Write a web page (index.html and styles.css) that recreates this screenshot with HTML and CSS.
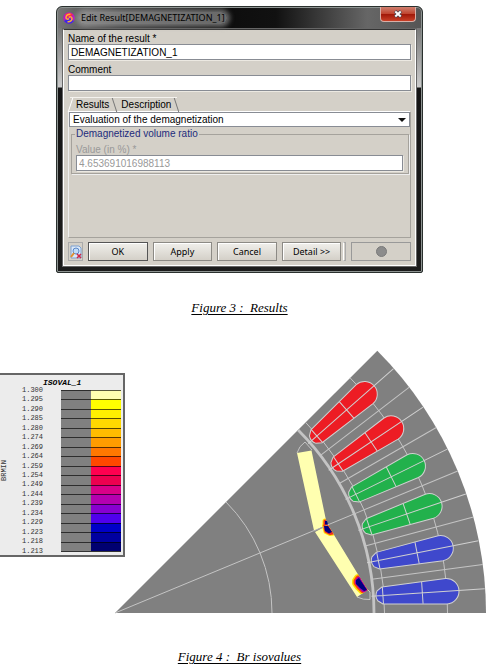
FILE: index.html
```
<!DOCTYPE html>
<html lang="en">
<head>
<meta charset="utf-8">
<title>Demagnetization results</title>
<link rel="stylesheet" href="styles.css">
</head>
<body>
<main class="page">
  <figure class="fig fig-dialog">
    <section class="dialog" aria-label="Edit Result">
      <header class="titlebar">
        <svg class="app-icon" viewBox="0 0 12 12" aria-hidden="true">
          <circle cx="6" cy="6" r="5.8" fill="#b818c0"/>
          <path d="M1 9A6 6 0 0 0 11 9L6 6Z" fill="#3a28e8"/>
          <path d="M2 2.500A6 6 0 0 1 10 2.500L6 6Z" fill="#ff2a48"/>
          <path d="M7.500 2.300C4.500 2 3 3.500 3 5.500S5 7.500 6 6.500" fill="none" stroke="#ffb030" stroke-width="1.500"/>
          <path d="M4.500 9.700C7.500 10 9 8.500 9 6.500S7 4.500 6 5.500" fill="none" stroke="#ffb030" stroke-width="1.500"/>
        </svg>
        <h1 class="title">Edit Result[DEMAGNETIZATION_1]</h1>
        <button class="close" type="button" aria-label="Close">
          <svg viewBox="0 0 10 8" aria-hidden="true">
            <path d="M2 1.200L8 6.800M8 1.200L2 6.800" stroke="#4d4a55" stroke-width="3.400"/>
            <path d="M2.300 1.500L7.700 6.500M7.700 1.500L2.300 6.500" stroke="#fff" stroke-width="1.900"/>
          </svg>
        </button>
      </header>
      <form class="client">
        <label class="label" for="name">Name of the result *</label>
        <input class="field" id="name" type="text" value="DEMAGNETIZATION_1">
        <label class="label" for="comment">Comment</label>
        <input class="field" id="comment" type="text">
        <div class="tabs" role="tablist">
          <button class="tab tab-on" type="button" role="tab" aria-selected="true">Results</button>
          <button class="tab" type="button" role="tab" aria-selected="false">Description</button>
        </div>
        <div class="panel" role="tabpanel">
          <div class="combo">
            <select class="select" aria-label="Result type"><option>Evaluation of the demagnetization</option></select>
          </div>
          <fieldset class="group">
            <legend>Demagnetized volume ratio</legend>
            <label class="label label-off" for="value">Value (in %) *</label>
            <input class="field" id="value" type="text" value="4.653691016988113" disabled>
          </fieldset>
        </div>
        <div class="actions">
          <button class="tool" type="button" aria-label="Preview">
            <svg viewBox="0 0 12 14" aria-hidden="true">
              <path d="M1 1H9L11 3V13H1Z" fill="#dce9f8" stroke="#7da0d0"/>
              <circle cx="6" cy="6" r="3" fill="#c0dcf8" stroke="#5a86c8"/>
              <path d="M4 8L1 12" stroke="#e09030" stroke-width="2"/>
              <path d="M7 9L11 13M11 9L7 13" stroke="#d02848" stroke-width="1.500"/>
            </svg>
          </button>
          <button class="btn btn-default" type="button">OK</button>
          <button class="btn" type="button">Apply</button>
          <button class="btn" type="button">Cancel</button>
          <button class="btn" type="button">Detail &gt;&gt;</button>
          <span class="grip"></span>
          <span class="status"><span class="lamp"></span></span>
        </div>
      </form>
    </section>
    <figcaption class="caption">Figure 3 :&nbsp; Results</figcaption>
  </figure>

  <figure class="fig fig-plot">
    <div class="plot">
      <div class="scale">
        <div class="scale-axis">BRMIN</div>
        <div class="scale-title">ISOVAL_1</div>
        <ol class="scale-values">
          <li>1.300</li><li>1.295</li><li>1.290</li><li>1.285</li><li>1.280</li><li>1.274</li>
          <li>1.269</li><li>1.264</li><li>1.259</li><li>1.254</li><li>1.249</li><li>1.244</li>
          <li>1.239</li><li>1.234</li><li>1.229</li><li>1.223</li><li>1.218</li><li>1.213</li>
        </ol>
        <div class="scale-bands">
          <i class="c1"></i><i class="c2"></i><i class="c3"></i><i class="c4"></i><i class="c5"></i><i class="c6"></i>
          <i class="c7"></i><i class="c8"></i><i class="c9"></i><i class="c10"></i><i class="c11"></i><i class="c12"></i>
          <i class="c13"></i><i class="c14"></i><i class="c15"></i><i class="c16"></i><i class="c17"></i>
        </div>
      </div>
      <svg class="motor" viewBox="0 -263 372 264" role="img" aria-label="Motor section with Br isovalues">
        <defs>
          <g id="slot">
            <path d="M268-8.500L332-12.700A12.700 12.700 0 0 1 332 12.700L268 8.500L263 5Q260 0 263-5Z"/>
            <path d="M257 0H370.500M308-11V11M268.500-8.500V8.500" fill="none"/>
          </g>
          <path id="magnets" d="M182-160L196.500-162.500L212-88L199-82.500ZM200-81L213-88L252.500-23L242-16Z"/>
          <clipPath id="in-magnets"><use href="#magnets"/></clipPath>
        </defs>
        <path d="M0 0H371A371 371 0 0 0 262.300-262.300Z" fill="#808080"/>
        <g fill="none" stroke="#c4c4c4">
          <path d="M157 0A157 157 0 0 0 111-111M0 0L239-99"/>
          <path d="M269.500 0A269.500 269.500 0 0 0 190.600-190.600M332.500 0A332.500 332.500 0 0 0 235.100-235.100"/>
          <path d="M259 0H371" transform="rotate(-7.500)"/>
          <path d="M259 0H371" transform="rotate(-15)"/>
          <path d="M259 0H371" transform="rotate(-22.500)"/>
          <path d="M259 0H371" transform="rotate(-30)"/>
          <path d="M259 0H371" transform="rotate(-37.500)"/>
          <path d="M259 0A259 259 0 0 0 183.100-183.100" stroke-width="2.800"/>
          <path d="M182-160Q184-167 190-171L197-163M242-16Q248-13 255-13.500V-21L252-24"/>
        </g>
        <g stroke="#d0d0d0">
          <use href="#slot" transform="rotate(-3.750)" fill="#3f48cc"/>
          <use href="#slot" transform="rotate(-11.250)" fill="#3f48cc"/>
          <use href="#slot" transform="rotate(-18.750)" fill="#22b14c"/>
          <use href="#slot" transform="rotate(-26.250)" fill="#22b14c"/>
          <use href="#slot" transform="rotate(-33.750)" fill="#ed1c24"/>
          <use href="#slot" transform="rotate(-41.250)" fill="#ed1c24"/>
        </g>
        <use href="#magnets" fill="#ffffb0"/>
        <path d="M199-82L212-88" stroke="#aaa"/>
        <g clip-path="url(#in-magnets)" stroke-linejoin="round">
          <path d="M210-92H213V-88H210Z M209.500-87H213L218-80L215-79.500L211-81.500Z" fill="#ffe000" stroke="#ffe000" stroke-width="5"/>
          <path d="M210-92H213V-88H210Z M209.500-87H213L218-80L215-79.500L211-81.500Z" fill="#f03020" stroke="#f03020" stroke-width="3"/>
          <path d="M243-35L241-32L241-30L244-26L248-22L254-20V-38Z" fill="#ffe000" stroke="#ffe000" stroke-width="8"/>
          <path d="M243-35L241-32L241-30L244-26L248-22L254-20V-38Z" fill="#ff5000" stroke="#ff4010" stroke-width="5"/>
          <path d="M243-35L241-32L241-30L244-26L248-22L254-20V-38Z" fill="#a000b0" stroke="#a000b0" stroke-width="2"/>
        </g>
        <g fill="#000080">
          <path d="M210-92H212L213-88.500H210Z M209-87H213L217-81L214-79.500L210-82Z"/>
          <path d="M244-35L252-23L249-22L245-25L241-29V-33Z"/>
        </g>
      </svg>
    </div>
    <figcaption class="caption">Figure 4 :&nbsp; Br isovalues</figcaption>
  </figure>
</main>
</body>
</html>
```
FILE: styles.css
```
* { box-sizing: border-box; }
body { margin: 0; background: #fff; color: #000; }
.page { padding-top: 6px; }
.fig { margin: 0; }
.caption {
  padding-right: 12px;
  text-align: center;
  font: italic 13px/16px "Liberation Serif", serif;
  text-decoration: underline;
  text-underline-offset: 2px;
}
button, input, select { margin: 0; padding: 0; border-radius: 0; font: inherit; color: inherit; }

/* Dialog window */
.dialog {
  width: calc(100% - 124px);
  max-width: 367px;
  margin-left: 56px;
  padding: 0 6px 6px;
  border: 1px solid #2a302e;
  border-radius: 6px 6px 2px 2px;
  box-shadow: inset 0 0 0 1px #8d9391;
  background:
    linear-gradient(90deg, #777 0, #333 18%, #0c0c0c 42%, #111 60%, #666 85%, #555) top / 100% 21px no-repeat,
    linear-gradient(#555 0, #777 20px, #ccc 80px, #151515 81px, #1c1c1c);
  font: 10px/12px "Liberation Sans", sans-serif;
}
.titlebar { display: flex; align-items: center; height: 22px; }
.app-icon { width: 12px; height: 12px; flex: none; }
.title {
  margin: 0 auto 0 4px;
  padding: 0 2px;
  border-radius: 8px;
  background: rgba(170, 170, 170, .6);
  box-shadow: 0 0 5px 3px rgba(170, 170, 170, .6);
  font: 9px/12px "Noto Sans", sans-serif;
  white-space: nowrap;
}
.close {
  align-self: flex-start;
  display: grid;
  place-items: center;
  width: 36px;
  height: 15px;
  border: 1px solid #d8b0a8;
  border-top: 0;
  border-radius: 0 0 4px 4px;
  background: linear-gradient(#d08070, #c04530 48%, #a01808 52%, #c84028);
}
.close svg { width: 10px; height: 8px; }
.client {
  padding: 1px 4px 4px;
  border: 1px solid #fff;
  border-top-color: #333;
  outline: 1px solid #666;
  background: #d4d0c8;
}
.label { display: block; height: 13px; line-height: 15px; }
.label-off { color: #999; }
.field {
  display: block;
  width: 100%;
  height: 16px;
  margin-bottom: 2px;
  padding: 0 2px;
  border: 1px solid #888c94;
  box-shadow: 1px 1px #ece9e2;
  background: #fff;
}
.field:disabled { color: #999; }
.tabs { display: flex; padding: 4px 0 0 2px; }
.tab {
  position: relative;
  height: 14px;
  padding: 0 6px;
  border: 0;
  border-top: 1px solid #f4f2ee;
  background: none;
}
.tab::after {
  content: "";
  position: absolute;
  top: 0;
  right: 0;
  width: 1px;
  height: 14px;
  background: #777;
  transform: skewX(18deg);
}
.tab-on::before {
  content: "";
  position: absolute;
  top: 0;
  left: 0;
  width: 1px;
  height: 14px;
  background: #fff;
  transform: skewX(-18deg);
}
.panel { height: 127px; border: 1px solid #a5a29c; border-top-color: #fff; border-left-color: #eee; }
.combo { position: relative; }
.combo::after {
  content: "";
  position: absolute;
  top: 6px;
  right: 4px;
  border: 4px solid transparent;
  border-top-color: #111;
  border-bottom: 0;
  pointer-events: none;
}
.select {
  display: block;
  width: 100%;
  height: 15px;
  padding: 0 3px;
  border: 1px solid #888c94;
  background: #fff;
  appearance: none;
}
.group { margin: 1px 1px 0 2px; padding: 2px 5px 0 4px; border: 1px solid #a5a29c; box-shadow: 1px 1px #eee; }
.group legend { margin-left: -1px; padding: 0 1px; color: #1d2c7c; }
.actions { display: flex; align-items: stretch; gap: 5px; height: 19px; margin-top: 4px; }
.tool { flex: none; display: grid; place-items: center; width: 15px; border: 1px solid #aaa; background: #d4d0c8; }
.tool svg { width: 12px; height: 14px; }
.btn {
  flex: 1;
  border: 1px solid #8c8a85;
  box-shadow: inset 1px 1px #fff;
  background: linear-gradient(#f0efeb, #d4d0c8);
  font: 9px/12px "Noto Sans", sans-serif;
}
.btn-default { border: 1px solid #555; }
.grip { width: 3px; margin-left: -3px; border: 1px solid #aaa; border-left-color: #fff; }
.status { flex: 1; display: grid; place-items: center; border: 1px solid #999; }
.lamp { width: 11px; height: 11px; border: 1px solid #7a7a7a; border-radius: 50%; background: #8c8c8c; }
.fig-dialog .caption { margin-top: 27px; }

/* Field plot */
.plot { display: grid; max-width: 487px; margin-top: 34px; }
.scale, .motor { grid-area: 1 / 1; }
.motor { justify-self: end; width: 372px; }
.scale {
  display: grid;
  grid-template: 8px 170px / 17px 26px 18px 60px;
  width: 125px;
  height: 184px;
  margin-top: 23px;
  padding-top: 3px;
  border: 2px solid #666;
  border-left: 0;
  background: #ececec;
  color: #333;
  font: 7px/9px "Liberation Mono", monospace;
}
.scale-title { grid-area: 1 / 2 / 2 / 5; padding-left: 26px; color: #000; font: italic bold 8px/9px "Liberation Mono", monospace; }
.scale-axis { grid-area: 2 / 1; place-self: center start; writing-mode: vertical-rl; transform: rotate(180deg); }
.scale-values { grid-area: 2 / 2; display: grid; grid-template-rows: repeat(18, 1fr); margin: 0; padding: 0 0 0 5px; list-style: none; }
.scale-bands { grid-area: 2 / 4; display: grid; grid-template-rows: repeat(17, 1fr); margin: 4px 0; border-bottom: 1px solid #333; }
.scale-bands i { border-top: 1px solid rgba(0, 0, 0, .65); background: linear-gradient(90deg, #808080 50%, transparent 50%) border-box; }
.scale-bands i { background-color: var(--c); }
.c1 { --c: #ffffb0; }
.c2 { --c: #ffff00; }
.c3 { --c: #fff000; }
.c4 { --c: #ffd800; }
.c5 { --c: #ffbc00; }
.c6 { --c: #ff9c00; }
.c7 { --c: #ff7800; }
.c8 { --c: #ff4800; }
.c9 { --c: #ff0050; }
.c10 { --c: #ec0050; }
.c11 { --c: #d80088; }
.c12 { --c: #b400b0; }
.c13 { --c: #8800d0; }
.c14 { --c: #5000ec; }
.c15 { --c: #0000c8; }
.c16 { --c: #0000a0; }
.c17 { --c: #000070; }
.fig-plot .caption { margin-top: 35px; }
```
